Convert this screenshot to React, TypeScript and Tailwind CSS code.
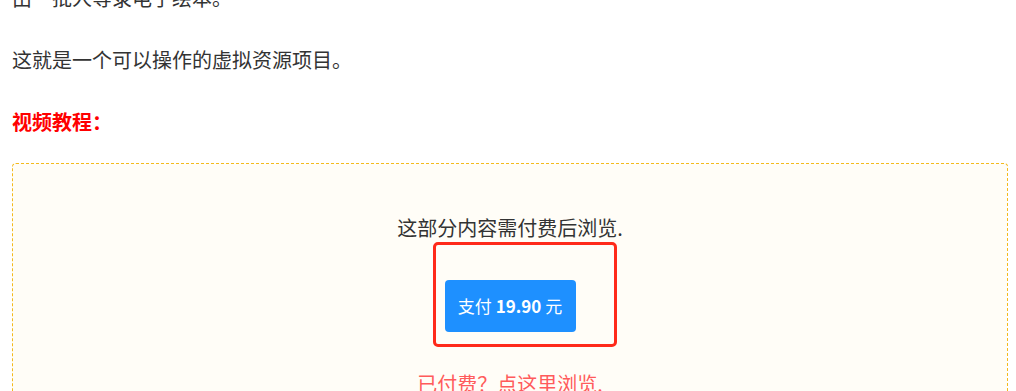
export default function App() {
  return (
    <div className="min-h-screen bg-white overflow-hidden">
      <div className="pl-3 pr-2 font-['Noto_Sans_CJK_SC',sans-serif] text-[20px] leading-[32px] text-[#333] -mt-[18px]">
        <p className="mb-[30px]">由一批人等录电子绘本。</p>
        <p className="mb-[30px]">这就是一个可以操作的虚拟资源项目。</p>
        <p className="font-bold text-[#ff0000]">视频教程：</p>
        <div className="mt-[25px] rounded-[4px] border border-dashed border-[#f4ba1c] bg-[#fffdf7] pt-[48px] pb-[40px] flex flex-col items-center">
          <p className="text-[20px] leading-[32px] text-[#333]">这部分内容需付费后浏览.</p>
          <div className="relative mt-[36px]">
            <button className="h-[52px] w-[131px] rounded-[4px] bg-[#1e90ff] text-white text-[17px] flex items-center justify-center">
              支付&nbsp;<span className="font-bold">19.90</span>&nbsp;元
            </button>
            <div className="pointer-events-none absolute -left-[12px] -top-[38px] -right-[41px] -bottom-[15px] rounded-[5px] border-[3px] border-[#ff2a1a]" />
          </div>
          <p className="mt-[36px] text-[20px] leading-[32px] text-[#ff5b5b]">已付费？点这里浏览.</p>
        </div>
      </div>
    </div>
  );
}
